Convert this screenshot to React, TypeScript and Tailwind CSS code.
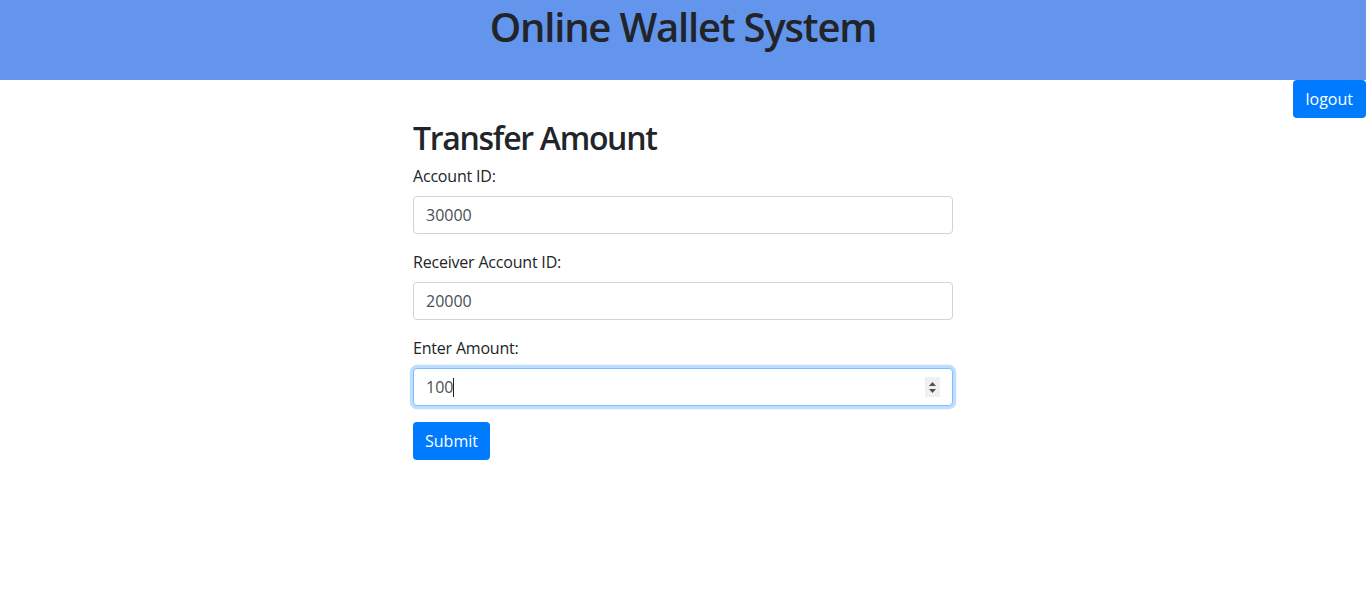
import React from 'react';

const font = { fontFamily: '"Open Sans", "Noto Sans", Arial, sans-serif' };

// Campo de formulario estilo bootstrap
const Field: React.FC<{ label: string; value: string }> = ({ label, value }) => (
  <div className="mb-4">
    <label className="block mb-2 text-base leading-6 tracking-[-0.2px] text-[#212529]">{label}</label>
    <input
      readOnly
      defaultValue={value}
      className="block w-full h-[38px] px-3 py-1.5 text-base text-[#495057] bg-white border border-[#ced4da] rounded outline-none"
    />
  </div>
);

export default function App() {
  return (
    <div className="min-h-screen bg-white" style={font}>
      {/* Header */}
      <header className="h-[80px] pt-[3px] bg-[#6495ed]">
        <h1 className="text-center text-[40px] leading-[48px] font-semibold tracking-[-1.2px] text-[#212529]">
          Online Wallet System
        </h1>
      </header>

      <div className="flex justify-end">
        <button className="h-[38px] px-[13px] text-base text-white bg-[#007bff] rounded">logout</button>
      </div>

      {/* Form */}
      <div className="w-[540px] mx-auto">
        <h2 className="pt-[2px] text-[32px] leading-[36px] font-semibold tracking-[-1.3px] text-[#212529] mb-2">
          Transfer Amount
        </h2>
        <Field label="Account ID:" value="30000" />
        <Field label="Receiver Account ID:" value="20000" />

        <div className="mb-4">
          <label className="block mb-2 text-base leading-6 tracking-[-0.2px] text-[#212529]">Enter Amount:</label>
          <div className="relative flex items-center w-full h-[38px] px-3 text-base text-[#495057] bg-white border border-[#80bdff] rounded shadow-[0_0_0_3.2px_rgba(0,123,255,0.25)]">
            <span>100</span>
            <span className="w-px h-[19px] bg-[#212529]" />
            <div className="absolute right-[12px] top-[8px] flex flex-col items-center justify-center gap-[3px] w-[15px] h-[20px] bg-[#f0f0f0]">
              <svg width="7" height="4" viewBox="0 0 7 4"><path d="M0 4 L3.5 0 L7 4 Z" fill="#505050" /></svg>
              <svg width="7" height="4" viewBox="0 0 7 4"><path d="M0 0 L3.5 4 L7 0 Z" fill="#505050" /></svg>
            </div>
          </div>
        </div>

        <button className="h-[38px] px-3 text-base text-white bg-[#007bff] rounded">Submit</button>
      </div>
    </div>
  );
}
